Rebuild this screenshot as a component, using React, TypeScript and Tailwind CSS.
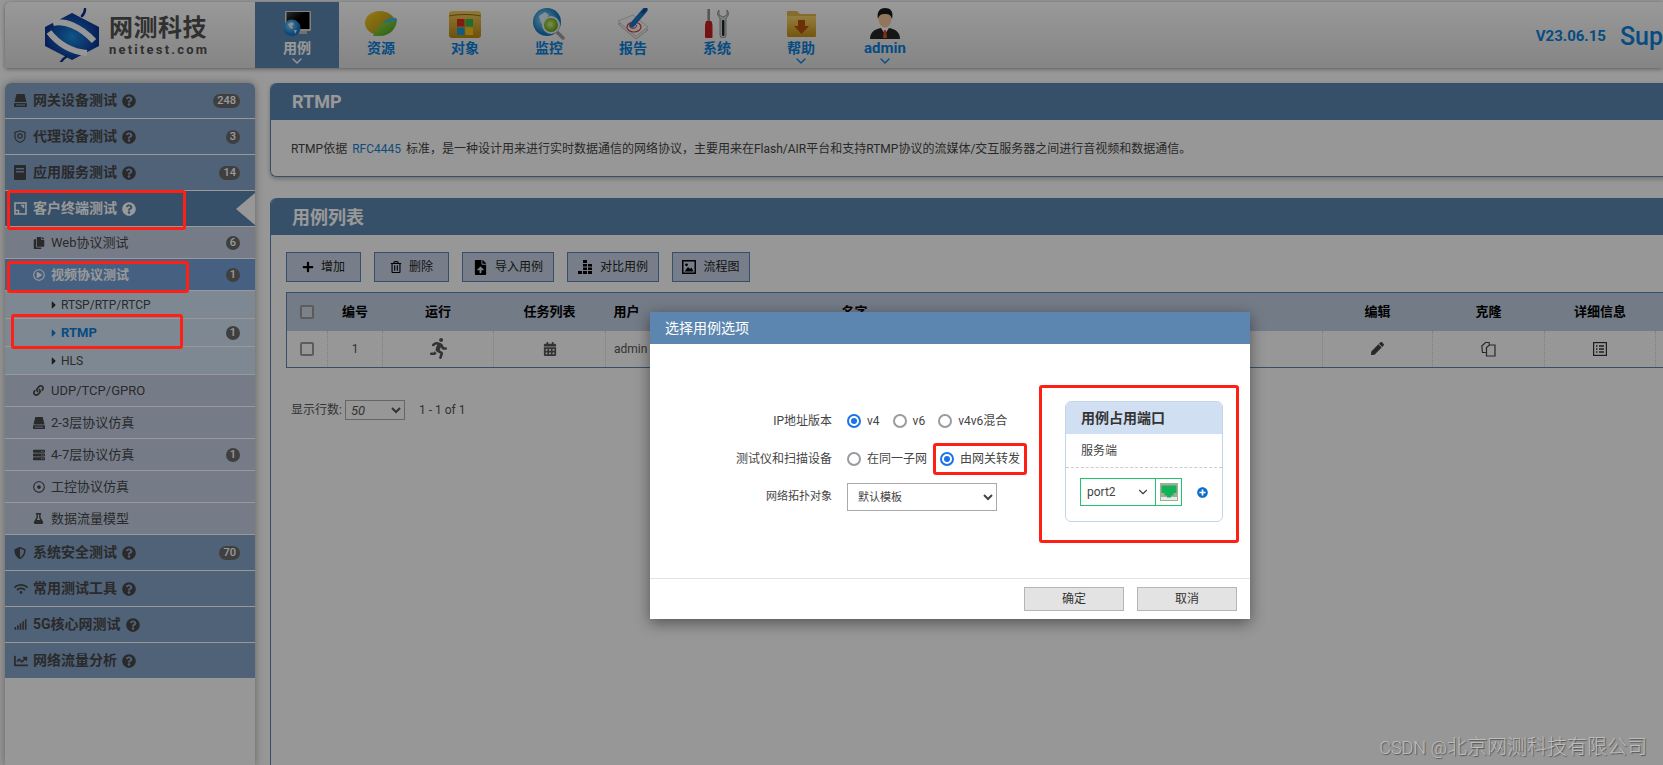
import type { ReactNode } from 'react'
import { ChevronDown } from 'lucide-react'
import {
  FaQuestionCircle,
  FaCopy,
  FaRegPlayCircle,
  FaLink,
  FaServer,
  FaRegDotCircle,
  FaFlask,
  FaShieldAlt,
  FaWifi,
  FaSignal,
  FaChartLine,
  FaPlus,
  FaRegTrashAlt,
  FaFileUpload,
  FaRunning,
  FaCalendarAlt,
  FaPen,
  FaCaretRight,
  FaPlusCircle,
} from 'react-icons/fa'

const FONT = "font-['Roboto','Noto_Sans_CJK_SC',sans-serif]"

function MonitorIcon() {
  return (
    <svg width="28" height="26" viewBox="0 0 28 26">
      <defs>
        <linearGradient id="mon" x1="0" y1="0" x2="1" y2="1">
          <stop offset="0" stopColor="#4a4a4a" />
          <stop offset="0.45" stopColor="#000" />
          <stop offset="1" stopColor="#000" />
        </linearGradient>
        <radialGradient id="glb" cx="0.4" cy="0.35">
          <stop offset="0" stopColor="#7fd4ff" />
          <stop offset="1" stopColor="#1a76c4" />
        </radialGradient>
      </defs>
      <rect x="2" y="0" width="26" height="20" rx="1" fill="#d8d8d8" />
      <rect x="3.5" y="1" width="23" height="17" fill="url(#mon)" />
      <rect x="16" y="20" width="8" height="3" fill="#bbb" />
      <circle cx="9" cy="17" r="8.5" fill="url(#glb)" />
      <path d="M5 13l4-2 2 2-2 2 1 3-3-1zM11 19l3 0-2 4z" fill="#d7f1ff" />
    </svg>
  )
}

function LeafIcon() {
  return (
    <svg width="32" height="26" viewBox="0 0 32 26">
      <defs>
        <linearGradient id="lf1" x1="0" y1="0" x2="1" y2="1">
          <stop offset="0" stopColor="#f4cf2a" />
          <stop offset="1" stopColor="#a98407" />
        </linearGradient>
        <linearGradient id="lf2" x1="0" y1="0" x2="1" y2="1">
          <stop offset="0" stopColor="#a9e24a" />
          <stop offset="1" stopColor="#3f9a1a" />
        </linearGradient>
      </defs>
      <ellipse cx="15" cy="12" rx="15" ry="12" fill="url(#lf1)" />
      <path d="M8 25C12 15 20 9 32 8C32 17 25 25 15 25Z" fill="url(#lf2)" />
      <path d="M17 12C21 8 27 6 31 7L32 10C26 10 21 11 17 12Z" fill="#3fb2e6" />
    </svg>
  )
}

function WindowsFolderIcon() {
  return (
    <svg width="32" height="28" viewBox="0 0 32 28">
      <defs>
        <linearGradient id="fd1" x1="0" y1="0" x2="0" y2="1">
          <stop offset="0" stopColor="#f3c95c" />
          <stop offset="1" stopColor="#b8860f" />
        </linearGradient>
      </defs>
      <path d="M3 1h26a3 3 0 0 1 3 3v21a3 3 0 0 1-3 3H3a3 3 0 0 1-3-3V4a3 3 0 0 1 3-3z" fill="url(#fd1)" />
      <path d="M0 6c10-2 22-2 32 0" stroke="#8f6a0d" strokeWidth="1" fill="none" />
      <rect x="8" y="9" width="7.5" height="7.5" fill="#d92b1f" />
      <rect x="16.5" y="9" width="7.5" height="7.5" fill="#39b54a" />
      <rect x="8" y="17.5" width="7.5" height="7.5" fill="#1b9ad6" />
      <rect x="16.5" y="17.5" width="7.5" height="7.5" fill="#f0c419" />
    </svg>
  )
}

function MonitorGlobeIcon() {
  return (
    <svg width="32" height="32" viewBox="0 0 32 32">
      <defs>
        <radialGradient id="gb2" cx="0.4" cy="0.4">
          <stop offset="0" stopColor="#9bdcf5" />
          <stop offset="1" stopColor="#1379bd" />
        </radialGradient>
        <radialGradient id="gb3" cx="0.45" cy="0.45">
          <stop offset="0" stopColor="#d6f07a" />
          <stop offset="1" stopColor="#5b9d14" />
        </radialGradient>
      </defs>
      <circle cx="14" cy="14" r="14" fill="url(#gb2)" />
      <path d="M6 8l6-4 4 3-5 5 1 5-4-2z" fill="#d4f1fb" />
      <path d="M24 24l6 6" stroke="#9a9a9a" strokeWidth="3.5" strokeLinecap="round" />
      <circle cx="18" cy="17" r="8" fill="url(#gb3)" stroke="#dfe8ea" strokeWidth="2" />
    </svg>
  )
}

function ReportIcon() {
  return (
    <svg width="32" height="32" viewBox="0 0 32 32">
      <path d="M1 16L16 10L31 22L19 31Z" fill="#e4e4e4" stroke="#a8a8a8" strokeWidth="0.8" />
      <path d="M1 13L16 7L31 19L19 28Z" fill="#f4f4f4" stroke="#bcbcbc" strokeWidth="0.8" />
      <ellipse cx="17" cy="19" rx="7" ry="5" fill="none" stroke="#cf3a36" strokeWidth="1.2" />
      <ellipse cx="16" cy="18" rx="3.5" ry="2.4" fill="none" stroke="#cf3a36" strokeWidth="1" />
      <path d="M15 17L28 2" stroke="#1f72c4" strokeWidth="5" strokeLinecap="round" />
      <path d="M26 4L29 1" stroke="#0f4f90" strokeWidth="3" strokeLinecap="round" />
    </svg>
  )
}

function ToolsIcon() {
  return (
    <svg width="27" height="29" viewBox="0 0 27 29">
      <rect x="3.4" y="0" width="2.6" height="13" fill="#8e8e8e" />
      <path d="M2 12h5.5l1 4v12a1 1 0 0 1-1 1H2a1 1 0 0 1-1-1V16z" fill="#c5211c" />
      <path d="M15 1C13 3 13 7 16 9V26a3 3 0 0 0 6 0V9C25 7 25 3 23 1V6L19 8L15 6Z" fill="#cfd4d6" stroke="#7b8082" strokeWidth="0.8" />
      <rect x="18" y="11" width="2.4" height="16" rx="1" fill="#222" />
    </svg>
  )
}

function ArrowFolderIcon() {
  return (
    <svg width="29" height="27" viewBox="0 0 29 27">
      <defs>
        <linearGradient id="fd2" x1="0" y1="0" x2="0" y2="1">
          <stop offset="0" stopColor="#f6d26a" />
          <stop offset="1" stopColor="#c08f16" />
        </linearGradient>
      </defs>
      <path d="M1 1h9l3 3h15a1 1 0 0 1 1 1v3H0V2a1 1 0 0 1 1-1z" fill="#e0b44a" />
      <rect x="0" y="6" width="29" height="21" rx="1.5" fill="url(#fd2)" />
      <path d="M11 10h7v6h4l-7.500 8L7 16h4z" fill="#b5500f" />
    </svg>
  )
}

function PersonIcon() {
  return (
    <svg width="30" height="31" viewBox="0 0 30 31">
      <path d="M0 31C0 24 5 21 11 20H19C25 21 30 24 30 31Z" fill="#262626" />
      <path d="M11 20L15 26L19 20Z" fill="#fff" />
      <path d="M14 22H16L17 30H13Z" fill="#d9541e" />
      <ellipse cx="15" cy="11" rx="6.500" ry="8.500" fill="#f3c49b" />
      <path d="M8 11C6 3 11 0 15 0C20 0 24 3 22 11C21 7 19 6 15 6C11 6 9 7 8 11Z" fill="#181818" />
    </svg>
  )
}

function LogoIcon() {
  return (
    <svg width="56" height="54" viewBox="0 0 56 54">
      <defs>
        <radialGradient id="lg" cx="0.5" cy="0.5" r="0.55">
          <stop offset="0" stopColor="#1a8ee0" />
          <stop offset="1" stopColor="#0b2c8c" />
        </radialGradient>
      </defs>
      <path d="M28 5L55 19V38L28 52L1 38V19Z" fill="url(#lg)" />
      <path d="M9 15C20 12 36 18 50 33" stroke="#fcfcfc" strokeWidth="6" fill="none" />
      <path d="M5 24C14 36 28 44 43 45" stroke="#fcfcfc" strokeWidth="6" fill="none" />
      <path d="M38 8C40 6 41 4 41 1" stroke="#0b2c8c" strokeWidth="2.500" fill="none" strokeLinecap="round" />
      <path d="M22 49C20 50 18 52 17 54" stroke="#0b2c8c" strokeWidth="2.500" fill="none" strokeLinecap="round" />
    </svg>
  )
}

function DriveIcon({ size = 13 }: { size?: number }) {
  return (
    <svg width={size} height={size} viewBox="0 0 13 13" fill="currentColor">
      <path d="M2.500 0H10.500L12.500 8H.5Z" />
      <path d="M1 9H12a1 1 0 0 1 1 1V12a1 1 0 0 1-1 1H1a1 1 0 0 1-1-1V10a1 1 0 0 1 1-1zM2 10.500V11.500H11V10.500z" fillRule="evenodd" />
    </svg>
  )
}

function ProxyIcon() {
  return (
    <svg width="12" height="13" viewBox="0 0 12 13" fill="none" stroke="currentColor">
      <path d="M6 .8L11 2.500V7C11 10 8 12 6 12.300C4 12 1 10 1 7V2.500Z" strokeWidth="1.200" />
      <circle cx="6" cy="6" r="2.200" strokeWidth="1.200" />
    </svg>
  )
}

function TowerIcon() {
  return (
    <svg width="12" height="15" viewBox="0 0 12 15" fill="currentColor">
      <path d="M1 0h10a1 1 0 0 1 1 1v13a1 1 0 0 1-1 1H1a1 1 0 0 1-1-1V1a1 1 0 0 1 1-1zM2 3v1.500h8V3zm0 3v1.500h8V6z" fillRule="evenodd" />
    </svg>
  )
}

function ClientIcon() {
  return (
    <svg width="13" height="13" viewBox="0 0 13 13" fill="none" stroke="currentColor" strokeWidth="1.600">
      <rect x="1" y="1" width="11" height="11" />
      <path d="M1 8.500H4.500V12" />
      <path d="M7 3.500H9.500V6" />
    </svg>
  )
}

function BarsIcon() {
  return (
    <svg width="15" height="14" viewBox="0 0 15 14" fill="currentColor">
      <rect x="0" y="11" width="4" height="3" />
      <rect x="5" y="11" width="4" height="3" />
      <rect x="10" y="11" width="4" height="3" />
      <rect x="5" y="7.500" width="4" height="2.500" />
      <rect x="10" y="7.500" width="4" height="2.500" />
      <rect x="5" y="4" width="4" height="2.500" />
      <rect x="10" y="4" width="4" height="2.500" />
      <rect x="5" y="0" width="4" height="3" />
    </svg>
  )
}

function PictureIcon() {
  return (
    <svg width="14" height="14" viewBox="0 0 14 14">
      <rect x="0.750" y="0.750" width="12.500" height="12.500" fill="none" stroke="#000" strokeWidth="1.500" />
      <circle cx="4.500" cy="4.800" r="1.400" fill="#000" />
      <path d="M2.500 11.500L6 7L8 9L9.500 7.500L11.500 11.500Z" fill="#000" />
    </svg>
  )
}

function CloneIcon() {
  return (
    <svg width="15" height="16" viewBox="0 0 15 16" fill="none" stroke="#444" strokeWidth="1.200">
      <path d="M5.500 11.500H1.500L.8 5L4.500 1.500H8L8.500 4" />
      <path d="M5.500 6.500L8.500 4H14V15H5.500Z" />
    </svg>
  )
}

function DetailIcon() {
  return (
    <svg width="14" height="14" viewBox="0 0 14 14" fill="none" stroke="#333">
      <rect x="0.600" y="0.600" width="12.800" height="12.800" strokeWidth="1.200" />
      <path d="M3 4H4.500M6 4H11M3 7H4.500M6 7H11M3 10H4.500M6 10H11" strokeWidth="1.300" />
    </svg>
  )
}

function PortIcon() {
  return (
    <svg width="18" height="18" viewBox="0 0 18 18">
      <rect x="0" y="0" width="18" height="18" fill="#9fb08e" />
      <rect x="1" y="14" width="16" height="3" fill="#e9e9e9" />
      <path d="M1.500 2.500H16.500V10H13.500V12.500H11V14.500H7V12.500H4.500V10H1.500Z" fill="#12b25a" />
    </svg>
  )
}

const TABS: { label: string; icon: ReactNode; active?: boolean; arrow?: boolean }[] = [
  { label: '用例', icon: <MonitorIcon />, active: true, arrow: true },
  { label: '资源', icon: <LeafIcon /> },
  { label: '对象', icon: <WindowsFolderIcon /> },
  { label: '监控', icon: <MonitorGlobeIcon /> },
  { label: '报告', icon: <ReportIcon /> },
  { label: '系统', icon: <ToolsIcon /> },
  { label: '帮助', icon: <ArrowFolderIcon />, arrow: true },
  { label: 'admin', icon: <PersonIcon />, arrow: true },
]

function Header() {
  return (
    <header className="ml-[5px] flex h-[66px] shrink-0 rounded-tl-md bg-gradient-to-b from-[#ffffff] to-[#dedede] shadow-[0_1px_4px_rgba(0,0,0,0.4)]">
      <div className="flex w-[250px] shrink-0 items-center pl-[39px]">
        <LogoIcon />
        <div className="ml-[9px] flex flex-col">
          <span className="text-[24px] leading-[30px] font-bold tracking-[0.5px] text-[#505050]">网测科技</span>
          <span className="text-[13px] leading-[14px] font-bold tracking-[2.2px] text-[#505050]">netitest.com</span>
        </div>
      </div>
      <nav className="flex">
        {TABS.map((t) => (
          <div
            key={t.label}
            className={`flex w-[84px] flex-col items-center pt-[5px] ${t.active ? 'bg-[#5c85af] text-white' : 'text-[#0a7ed8]'}`}
          >
            <div className="flex h-[33px] shrink-0 items-center justify-center">{t.icon}</div>
            <span className={`shrink-0 leading-[16px] font-bold ${t.label === 'admin' ? 'text-[15px]' : 'text-[14px]'}`}>{t.label}</span>
            {t.arrow && <ChevronDown size={16} strokeWidth={2} className="-mt-[3px] shrink-0" />}
          </div>
        ))}
      </nav>
      <div className="ml-auto flex items-center pt-[3px] whitespace-nowrap text-[#0a7ed8]">
        <span className="mr-[14px] text-[15px] font-bold">V23.06.15</span>
        <span className="text-[25px] font-medium">Sup</span>
      </div>
    </header>
  )
}

function Badge({ children }: { children: ReactNode }) {
  return (
    <span className="ml-auto flex h-[14px] min-w-[14px] items-center justify-center rounded-full bg-[#6a6a6a] px-[4px] text-[11px] leading-none font-medium text-white">
      {children}
    </span>
  )
}

function TopRow({ icon, label, count, active }: { icon: ReactNode; label: string; count?: string; active?: boolean }) {
  return (
    <div
      className={`relative flex h-[36px] items-center border-b border-white pr-[15px] pl-[9px] text-[14px] font-bold ${
        active ? 'bg-[#5c85af] text-white' : 'bg-[#86a3c7] text-[#474747]'
      }`}
    >
      <span className="flex w-[19px] shrink-0 justify-start">{icon}</span>
      <span>{label}</span>
      <FaQuestionCircle size={14} className="ml-[5px]" />
      {count && <Badge>{count}</Badge>}
      {active && (
        <span className="absolute top-[2px] right-0 h-0 w-0 border-y-[16px] border-r-[19px] border-y-transparent border-r-[#fcfcfc]" />
      )}
    </div>
  )
}

function SubRow({ icon, label, count, active }: { icon: ReactNode; label: string; count?: string; active?: boolean }) {
  return (
    <div
      className={`flex h-[32px] items-center border-b border-white pr-[15px] pl-[28px] text-[13px] ${
        active ? 'bg-[#73a0d5] font-bold text-white' : 'bg-[#c3cfe3] text-[#464646]'
      }`}
    >
      <span className="flex w-[18px] shrink-0">{icon}</span>
      <span>{label}</span>
      {count && <Badge>{count}</Badge>}
    </div>
  )
}

function LeafRow({ label, count, active }: { label: string; count?: string; active?: boolean }) {
  return (
    <div
      className={`flex h-[28px] items-center border-b border-white bg-[#d2e3f3] pr-[15px] pl-[44px] ${
        active ? 'text-[13px] font-bold text-[#0a7ed8]' : 'text-[12px] text-[#464646]'
      }`}
    >
      <FaCaretRight size={12} className={`mr-[1px] -ml-[1px] ${active ? 'text-[#0a7ed8]' : 'text-[#333]'}`} />
      <span>{label}</span>
      {count && <Badge>{count}</Badge>}
    </div>
  )
}

function Sidebar() {
  return (
    <aside className="w-[250px] shrink-0 overflow-hidden rounded-t-md bg-[#fcfcfc] shadow-[0_0_8px_rgba(0,0,0,0.35)]">
      <TopRow icon={<DriveIcon />} label="网关设备测试" count="248" />
      <TopRow icon={<ProxyIcon />} label="代理设备测试" count="3" />
      <TopRow icon={<TowerIcon />} label="应用服务测试" count="14" />
      <TopRow icon={<ClientIcon />} label="客户终端测试" active />
      <SubRow icon={<FaCopy size={12} />} label="Web协议测试" count="6" />
      <SubRow icon={<FaRegPlayCircle size={12} />} label="视频协议测试" count="1" active />
      <LeafRow label="RTSP/RTP/RTCP" />
      <LeafRow label="RTMP" count="1" active />
      <LeafRow label="HLS" />
      <SubRow icon={<FaLink size={11} />} label="UDP/TCP/GPRO" />
      <SubRow icon={<DriveIcon size={12} />} label="2-3层协议仿真" />
      <SubRow icon={<FaServer size={12} />} label="4-7层协议仿真" count="1" />
      <SubRow icon={<FaRegDotCircle size={12} />} label="工控协议仿真" />
      <SubRow icon={<FaFlask size={11} />} label="数据流量模型" />
      <TopRow icon={<FaShieldAlt size={12} />} label="系统安全测试" count="70" />
      <TopRow icon={<FaWifi size={14} />} label="常用测试工具" />
      <TopRow icon={<FaSignal size={13} />} label="5G核心网测试" />
      <TopRow icon={<FaChartLine size={14} />} label="网络流量分析" />
    </aside>
  )
}

function ToolButton({ icon, label, width }: { icon: ReactNode; label: string; width: string }) {
  return (
    <button className={`flex h-[30px] items-center justify-center gap-[7px] border border-[#5c85af] bg-[#c6d3e6] text-[12px] text-[#222] ${width}`}>
      {icon}
      {label}
    </button>
  )
}

function CaseTable() {
  const th = 'h-[38px] text-[13px] font-bold text-black'
  const td = 'h-[37px] border-r border-dotted border-[#c9d6e2] text-center text-[12px] text-[#555]'
  return (
    <table className="mt-[10px] w-[1500px] table-fixed border-collapse border-y border-l border-[#5c85af]">
      <colgroup>
        <col className="w-[41px]" />
        <col className="w-[55px]" />
        <col className="w-[111px]" />
        <col className="w-[112px]" />
        <col className="w-[95px]" />
        <col className="w-[308px]" />
        <col className="w-[314px]" />
        <col className="w-[110px]" />
        <col className="w-[112px]" />
        <col className="w-[111px]" />
        <col />
      </colgroup>
      <thead>
        <tr className="bg-[#c0cde1]">
          <th className={th}>
            <span className="mx-auto block h-[14px] w-[14px] rounded-[2px] border-2 border-[#999] bg-[#e8e8e8]/40" />
          </th>
          <th className={th}>编号</th>
          <th className={th}>运行</th>
          <th className={th}>任务列表</th>
          <th className={`${th} pl-[8px] text-left`}>用户</th>
          <th className={th}>名字</th>
          <th className={th} />
          <th className={th}>编辑</th>
          <th className={th}>克隆</th>
          <th className={th}>详细信息</th>
          <th className={th} />
        </tr>
      </thead>
      <tbody>
        <tr>
          <td className={td}>
            <span className="mx-auto block h-[14px] w-[14px] rounded-[2px] border-2 border-[#999]" />
          </td>
          <td className={td}>1</td>
          <td className={td}>
            <FaRunning size={21} className="mx-auto text-[#555]" />
          </td>
          <td className={td}>
            <FaCalendarAlt size={14} className="mx-auto text-[#555]" />
          </td>
          <td className={`${td} pl-[8px] text-left`}>admin</td>
          <td className={td} />
          <td className={td} />
          <td className={td}>
            <FaPen size={13} className="mx-auto text-[#444]" />
          </td>
          <td className={td}>
            <span className="flex justify-center"><CloneIcon /></span>
          </td>
          <td className={td}>
            <span className="flex justify-center"><DetailIcon /></span>
          </td>
          <td className="h-[37px]" />
        </tr>
      </tbody>
    </table>
  )
}

function Content() {
  return (
    <main className="ml-[15px] w-[1500px] shrink-0">
      <section className="h-[94px] rounded-t-md rounded-bl-md border-b border-l border-[#5c85af] shadow-[0_2px_4px_rgba(0,0,0,0.25)]">
        <h2 className="flex h-[37px] items-center rounded-t-md bg-[#5c85af] pl-[21px] text-[18px] font-bold text-white">RTMP</h2>
        <p className="mt-[20px] pl-[20px] text-[12px] leading-[18px] text-[#444]">
          RTMP依据 <span className="mx-[2px] text-[#1a7fce]">RFC4445</span> 标准，是一种设计用来进行实时数据通信的网络协议，主要用来在Flash/AIR平台和支持RTMP协议的流媒体/交互服务器之间进行音视频和数据通信。
        </p>
      </section>
      <section className="mt-[21px] h-[600px] rounded-tl-md border-l border-[#5c85af]">
        <h2 className="flex h-[37px] items-center rounded-tl-md bg-[#5c85af] pt-[1px] pl-[21px] text-[18px] font-bold text-white">用例列表</h2>
        <div className="pt-[17px] pl-[15px]">
          <div className="flex gap-[13px]">
            <ToolButton icon={<FaPlus size={12} className="text-black" />} label="增加" width="w-[75px]" />
            <ToolButton icon={<FaRegTrashAlt size={12} className="text-black" />} label="删除" width="w-[75px]" />
            <ToolButton icon={<FaFileUpload size={15} className="text-black" />} label="导入用例" width="w-[92px]" />
            <ToolButton icon={<span className="text-black"><BarsIcon /></span>} label="对比用例" width="w-[92px]" />
            <ToolButton icon={<PictureIcon />} label="流程图" width="w-[78px]" />
          </div>
          <CaseTable />
          <div className="mt-[32px] flex items-center pl-[5px] text-[12px] text-[#555]">
            <span>显示行数:</span>
            <select defaultValue="50" className="ml-[3px] h-[20px] w-[60px] border border-[#aaa] bg-[#fcfcfc] pl-[1px] text-[13px] italic text-[#555]">
              <option>50</option>
            </select>
            <span className="ml-[14px]">1 - 1 of 1</span>
          </div>
        </div>
      </section>
    </main>
  )
}

function Radio({ checked, label }: { checked?: boolean; label: string }) {
  return (
    <label className="flex items-center gap-[6px]">
      <span className={`flex h-[14px] w-[14px] items-center justify-center rounded-full border-2 ${checked ? 'border-[#1a73e8]' : 'border-[#9a9a9f]'}`}>
        {checked && <span className="h-[6px] w-[6px] rounded-full bg-[#1a73e8]" />}
      </span>
      {label}
    </label>
  )
}

function FormRow({ label, small, children }: { label: string; small?: boolean; children: ReactNode }) {
  return (
    <div className="flex h-[38px] items-center">
      <span className={`w-[182px] shrink-0 text-right text-[#444] ${small ? 'text-[11px]' : ''}`}>{label}</span>
      <div className="ml-[15px] flex items-center gap-[13px] text-[#444]">{children}</div>
    </div>
  )
}

function Modal() {
  return (
    <div className="absolute top-[312px] left-[650px] w-[600px] bg-white text-[12px] shadow-[0_4px_14px_rgba(0,0,0,0.45)]">
      <div className="flex h-[32px] items-center bg-[#5c86b0] pl-[15px] text-[14px] text-white">选择用例选项</div>
      <div className="flex h-[234px]">
        <div className="w-[415px] shrink-0 pt-[58px]">
          <FormRow label="IP地址版本">
            <Radio checked label="v4" />
            <Radio label="v6" />
            <Radio label="v4v6混合" />
          </FormRow>
          <FormRow label="测试仪和扫描设备">
            <Radio label="在同一子网" />
            <Radio checked label="由网关转发" />
          </FormRow>
          <FormRow label="网络拓扑对象" small>
            <select defaultValue="默认模板" className="h-[28px] w-[150px] border border-[#aaa] bg-white pl-[6px] text-[11px] text-[#444]">
              <option>默认模板</option>
            </select>
          </FormRow>
        </div>
        <div className="mt-[57px] h-[121px] w-[158px] shrink-0 overflow-hidden rounded-md border border-[#c5d5e8]">
          <div className="flex h-[32px] items-center bg-[#d0dff1] pl-[15px] text-[14px] font-bold text-[#333]">用例占用端口</div>
          <div className="flex h-[34px] items-center border-b border-dashed border-[#ccc] pl-[15px] text-[#444]">服务端</div>
          <div className="mt-[10px] flex items-center pl-[14px]">
            <div className="flex h-[28px] w-[76px] items-center justify-between border border-[#1fc46b] pr-[5px] pl-[6px] text-[#444]">
              port2
              <ChevronDown size={14} />
            </div>
            <div className="-ml-px flex h-[28px] w-[27px] items-center justify-center border border-[#1fc46b]">
              <PortIcon />
            </div>
            <FaPlusCircle size={11} className="ml-[15px] text-[#0b6fc9]" />
          </div>
        </div>
      </div>
      <div className="flex h-[41px] justify-end gap-[13px] border-t border-[#e3e3e3] pt-[8px] pr-[13px]">
        <button className="h-[24px] w-[100px] border border-[#b5b5b5] bg-[#e3e3e3] text-[12px] text-[#333]">确定</button>
        <button className="h-[24px] w-[100px] border border-[#b5b5b5] bg-[#e3e3e3] text-[12px] text-[#333]">取消</button>
      </div>
    </div>
  )
}

// annotations drawn over the screenshot
function Annotations() {
  const box = 'absolute rounded-[3px] border-[3px] border-[#ff2015]'
  return (
    <>
      <div className={`${box} top-[190px] left-[7px] h-[40px] w-[179px]`} />
      <div className={`${box} top-[261px] left-[7px] h-[32px] w-[182px]`} />
      <div className={`${box} top-[314px] left-[11px] h-[35px] w-[172px]`} />
      <div className={`${box} top-[443px] left-[933px] h-[32px] w-[94px]`} />
      <div className={`${box} top-[385px] left-[1039px] h-[158px] w-[200px]`} />
    </>
  )
}

export default function App() {
  return (
    <div className={`relative flex h-[765px] w-full flex-col overflow-hidden bg-[#fcfcfc] pt-[2px] ${FONT}`}>
      <Header />
      <div className="mt-[15px] ml-[5px] flex min-h-0 flex-1">
        <Sidebar />
        <Content />
      </div>
      <div className="absolute inset-0 bg-black/40" />
      <Modal />
      <Annotations />
      <span className="absolute right-[16px] bottom-[3px] text-[20px] font-light text-[#bdbdbd] [text-shadow:1px_1px_1px_#555]">
        <span className="text-[18px]">CSDN @</span>北京网测科技有限公司
      </span>
    </div>
  )
}
